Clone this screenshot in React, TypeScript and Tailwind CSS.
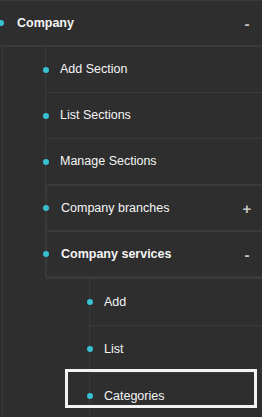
import React from 'react';

type Item = {
  label: string;
  bold?: boolean;
  sign?: '+' | '-';
  group?: boolean;
  focused?: boolean;
};

const sections: Item[] = [
  { label: 'Add Section' },
  { label: 'List Sections' },
  { label: 'Manage Sections' },
  { label: 'Company branches', sign: '+', group: true },
  { label: 'Company services', sign: '-', bold: true, group: true },
];

const services: Item[] = [
  { label: 'Add' },
  { label: 'List' },
  { label: 'Categories', focused: true },
];

function Dot({ className }: { className: string }) {
  return <span className={`absolute top-1/2 -translate-y-1/2 w-[6px] h-[6px] rounded-full bg-[#37c0d0] ${className}`} />;
}

function Sign({ value }: { value: string }) {
  return (
    <span className="ml-auto w-[10px] text-center text-[15px] font-bold leading-none text-[#c8c8c8]">
      {value}
    </span>
  );
}

function LevelOneRow({ item }: { item: Item }) {
  return (
    <div
      className={`relative ml-[42px] flex h-[46px] items-center border-b border-[#3a3a3a] pl-[14px] pr-[10px] ${
        item.group ? 'border-l-2 border-t' : 'border-l'
      }`}
    >
      <Dot className={item.group ? 'left-[-4px]' : 'left-[-3px]'} />
      <span className={item.bold ? 'font-bold' : ''}>{item.label}</span>
      {item.sign && <Sign value={item.sign} />}
    </div>
  );
}

function LevelTwoRow({ item }: { item: Item }) {
  return (
    <div className="relative ml-[43px] flex h-[47px] items-center border-b border-l border-[#3a3a3a] pl-[14px]">
      <Dot className="left-[-3px]" />
      <span>{item.label}</span>
      {item.focused && (
        <span className="pointer-events-none absolute left-[-25px] right-[5px] top-[-4px] bottom-[11px] border-[3px] border-[#f2f2f2]" />
      )}
    </div>
  );
}

export default function App() {
  return (
    <div className="h-[417px] w-[262px] overflow-hidden bg-[#2e2e2e] font-['Liberation_Sans',Arial,sans-serif] text-[12.5px] text-[#f5f5f5]">
      <ul>
        <li>
          <div className="relative flex h-[46px] items-center border-y border-[#3a3a3a] pl-[17px] pr-[10px]">
            <Dot className="left-[-2px]" />
            <span className="font-bold">Company</span>
            <Sign value="-" />
          </div>
          <ul className="ml-[2px] border-l border-t border-[#3a3a3a]">
            {sections.map((item) => (
              <li key={item.label}>
                <LevelOneRow item={item} />
                {item.label === 'Company services' && (
                  <ul className="ml-[43px] border-t-2 border-[#3a3a3a]">
                    {services.map((s) => (
                      <li key={s.label}>
                        <LevelTwoRow item={s} />
                      </li>
                    ))}
                  </ul>
                )}
              </li>
            ))}
          </ul>
        </li>
      </ul>
    </div>
  );
}
